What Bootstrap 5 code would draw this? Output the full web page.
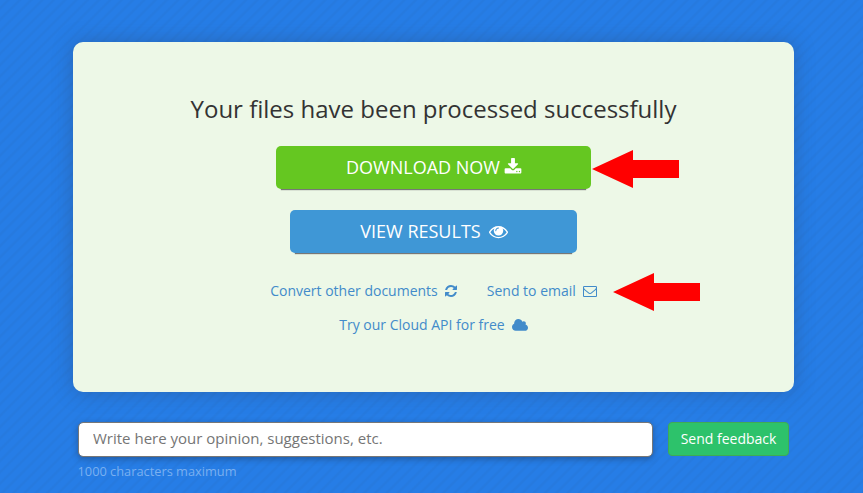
<!DOCTYPE html>
<html lang="en">
<head>
<meta charset="utf-8">
<meta name="viewport" content="width=device-width, initial-scale=1">
<title>Files processed</title>
<link href="https://cdn.jsdelivr.net/npm/bootstrap@5.3.0/dist/css/bootstrap.min.css" rel="stylesheet">
<style>
body{font-family:"Open Sans",sans-serif;font-size:14px;min-height:493px;overflow:hidden;background:repeating-linear-gradient(135deg,#267de6 0 4px,#267adf 5.5px 6.5px,#267de6 8px)}
.page-wrap{width:721px;margin-left:73px;padding-top:42px}
.result-panel{height:350px;padding-top:49px;border-radius:10px;background:#edf8e7;box-shadow:0 0 20px rgba(45,70,110,.4)}
.result-title{font-size:24px;line-height:36px;color:#333;margin-bottom:19px;white-space:nowrap}
.btn-action{height:43px;padding:0 0 0 1px;border:0;border-radius:5px;font-size:18px;line-height:43px;color:#fff;white-space:nowrap;box-shadow:0 6px 1px -5px #777}
.btn-action:hover{color:#fff}
.btn-get{width:315px;background:#65c721;margin-bottom:21px}
.btn-view{width:287px;background:#3f97d6;margin-bottom:28px}
.link-row{gap:29px;margin-bottom:14px}
.result-link{color:#428bca;text-decoration:none;line-height:20px;white-space:nowrap}
.glyph{display:inline-block;fill:currentColor;flex:none;width:14px;height:14px;margin-left:7px}
.glyph-get{width:18px;height:18px;margin:0 0 1px 4px}
.glyph-view{width:19px;height:19px;margin:0 0 0 8px}
.glyph-refresh{margin-left:6px}
.glyph-cloud{width:16px;height:15px}
.feedback-row{padding:30px 5px 0;gap:15px}
.feedback-input{width:575px;height:35px;padding:0 14px 3px;border:1px solid #777;border-radius:5px;font-size:15px;line-height:22px;box-shadow:0 2px 6px rgba(30,50,80,.45)}
.feedback-input::placeholder{color:#757575}
.btn-feedback{width:121px;height:34px;padding:0 0 1px;border:1px solid #3fab55;border-radius:4px;background:#2dc26b;color:#fff;font-size:14px;line-height:20px;white-space:nowrap}
.limit-note{font-size:12.8px;line-height:18px;color:#7ab0f0;padding:5px 0 0 4.5px}
.pointer{position:absolute;width:88px;height:39px;fill:#f00}
.pointer-get{left:592px;top:149px}
.pointer-mail{left:613px;top:272px}
</style>
<script defer src="https://cdn.jsdelivr.net/npm/bootstrap@5.3.0/dist/js/bootstrap.bundle.min.js"></script>
</head>
<body>
<main class="page-wrap">
  <section class="result-panel d-flex flex-column align-items-center">
    <h1 class="result-title fw-normal">Your files have been processed successfully</h1>
    <a href="#" class="btn btn-action btn-get d-flex justify-content-center align-items-center"><span>DOWNLOAD NOW</span>
      <svg class="glyph glyph-get" viewBox="0 0 1792 1792"><path d="M1344 1344q0-26-19-45t-45-19-45 19-19 45 19 45 45 19 45-19 19-45zm256 0q0-26-19-45t-45-19-45 19-19 45 19 45 45 19 45-19 19-45zm128-224v320q0 40-28 68t-68 28h-1472q-40 0-68-28t-28-68v-320q0-40 28-68t68-28h465l135 136q58 56 136 56t136-56l136-136h464q40 0 68 28t28 68zm-325-569q17 41-14 70l-448 448q-18 19-45 19t-45-19l-448-448q-31-29-14-70 17-39 59-39h256v-448q0-26 19-45t45-19h256q26 0 45 19t19 45v448h256q42 0 59 39z"/></svg></a>
    <a href="#" class="btn btn-action btn-view d-flex justify-content-center align-items-center"><span>VIEW RESULTS</span>
      <svg class="glyph glyph-view" viewBox="0 0 1792 1792"><path d="M1664 960q-152-236-381-353 61 104 61 225 0 185-131.5 316.5t-316.5 131.5-316.5-131.5-131.5-316.5q0-121 61-225-229 117-381 353 133 205 333.5 326.5t434.5 121.5 434.5-121.5 333.5-326.5zm-720-384q0-20-14-34t-34-14q-125 0-214.5 89.5t-89.5 214.5q0 20 14 34t34 14 34-14 14-34q0-86 61-147t147-61q20 0 34-14t14-34zm848 384q0 34-20 69-140 230-376.5 368.5t-499.5 138.5-499.5-139-376.5-368q-20-35-20-69t20-69q140-229 376.5-368t499.5-139 499.5 139 376.5 368q20 35 20 69z"/></svg></a>
    <div class="link-row d-flex justify-content-center">
      <a href="#" class="result-link d-flex align-items-center"><span>Convert other documents</span>
        <svg class="glyph glyph-refresh" viewBox="0 0 1792 1792"><path d="M1639 1056q0 5-1 7-64 268-268 434.5t-478 166.5q-146 0-282.5-55t-243.5-157l-129 129q-19 19-45 19t-45-19-19-45v-448q0-26 19-45t45-19h448q26 0 45 19t19 45-19 45l-137 137q71 66 161 102t187 36q134 0 250-65t186-179q11-17 53-117 8-23 30-23h192q13 0 22.5 9.5t9.5 22.5zm25-800v448q0 26-19 45t-45 19h-448q-26 0-45-19t-19-45 19-45l138-138q-148-137-349-137-134 0-250 65t-186 179q-11 17-53 117-8 23-30 23h-199q-13 0-22.5-9.5t-9.5-22.5v-7q65-268 270-434.5t480-166.5q146 0 284 55.5t245 156.5l130-129q19-19 45-19t45 19 19 45z"/></svg></a>
      <a href="#" class="result-link d-flex align-items-center"><span>Send to email</span>
        <svg class="glyph" viewBox="0 0 1792 1792"><path d="M1664 1504v-768q-32 36-69 66-268 206-426 338-51 43-83 67t-86.5 48.5-102.5 24.5h-2q-48 0-102.5-24.5t-86.5-48.5-83-67q-158-132-426-338-37-30-69-66v768q0 13 9.5 22.5t22.5 9.5h1472q13 0 22.5-9.5t9.5-22.5zm0-1051v-24.5l-.5-13-3-12.5-5.5-9-9-7.5-14-2.5h-1472q-13 0-22.5 9.5t-9.5 22.5q0 168 147 284 193 152 401 317 6 5 35 29.5t46 37.5 44.5 31.5 50.5 27.5 43 9h2q20 0 43-9t50.5-27.5 44.5-31.5 46-37.5 35-29.5q208-165 401-317 54-43 100.5-115.5t46.5-131.5zm128-37v1088q0 66-47 113t-113 47h-1472q-66 0-113-47t-47-113v-1088q0-66 47-113t113-47h1472q66 0 113 47t47 113z"/></svg></a>
    </div>
    <a href="#" class="result-link d-flex align-items-center"><span>Try our Cloud API for free</span>
      <svg class="glyph glyph-cloud" viewBox="-64 0 1920 1792"><path d="M1856 1152q0 159-112.5 271.5t-271.5 112.5h-1088q-185 0-316.5-131.5t-131.5-316.5q0-132 71-241.5t187-163.5q-2-28-2-43 0-212 150-362t362-150q158 0 286.5 88t187.5 230q70-62 166-62 106 0 181 75t75 181q0 75-41 138 129 30 213 134.5t84 239.5z"/></svg></a>
  </section>
  <form>
    <div class="feedback-row d-flex align-items-start">
      <input type="text" class="form-control feedback-input" placeholder="Write here your opinion, suggestions, etc." aria-label="Feedback">
      <button type="button" class="btn btn-feedback">Send feedback</button>
    </div>
    <div class="limit-note">1000 characters maximum</div>
  </form>
</main>
<svg class="pointer pointer-get" viewBox="0 0 88 39"><path d="M0 20 41 1v10h46v18H41V39z"/></svg>
<svg class="pointer pointer-mail" viewBox="0 0 88 39"><path d="M0 20 41 1v10h46v18H41V39z"/></svg>
</body>
</html>
